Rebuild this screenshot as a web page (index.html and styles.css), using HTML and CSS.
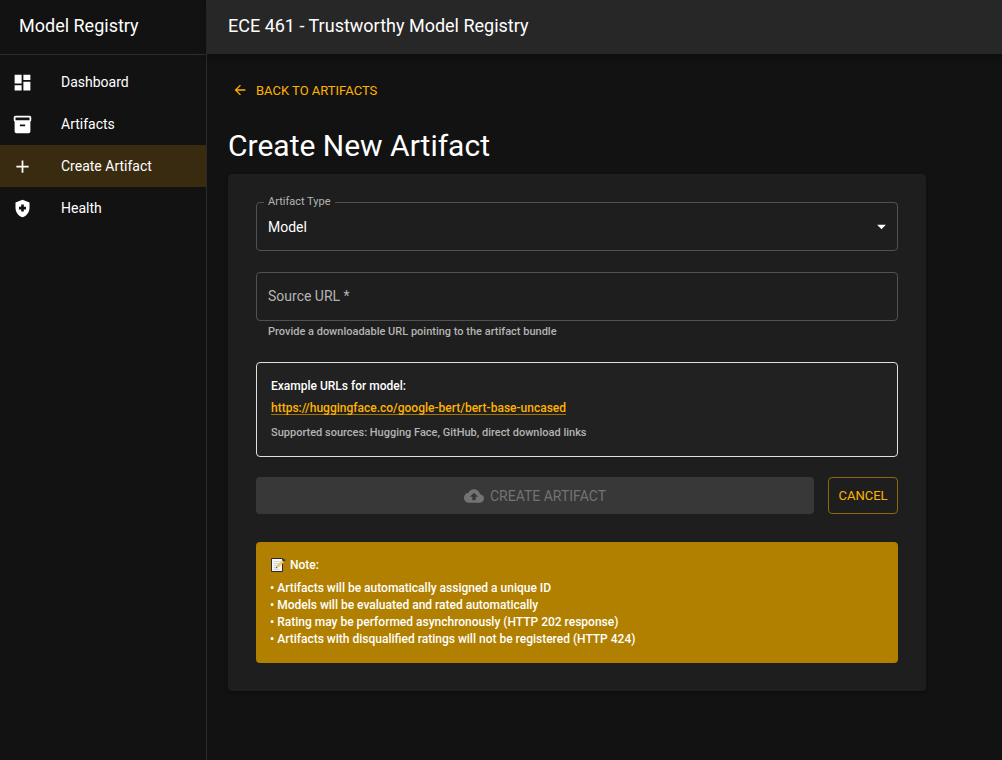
FILE: index.html
```html
<!DOCTYPE html>
<html lang="en">
<head>
<meta charset="utf-8">
<meta name="viewport" content="width=device-width, initial-scale=1">
<title>Create New Artifact - Model Registry</title>
<link rel="stylesheet" href="styles.css">
</head>
<body>
<div class="app">
  <aside class="sidebar">
    <div class="brand">Model Registry</div>
    <nav class="nav">
      <a class="nav-item" href="#dashboard">
        <svg class="icon" viewBox="0 0 24 24" aria-hidden="true"><path d="M3 13h8V3H3zm0 8h8v-6H3zm10 0h8V11h-8zm0-18v6h8V3z"/></svg>
        <span>Dashboard</span>
      </a>
      <a class="nav-item" href="#artifacts">
        <svg class="icon" viewBox="0 0 24 24" aria-hidden="true"><path d="M20 2H4c-1 0-2 .9-2 2v3.010c0 .72.43 1.340 1 1.690V20c0 1.100 1.100 2 2 2h14c.9 0 2-.9 2-2V8.700c.57-.35 1-.97 1-1.690V4c0-1.100-1-2-2-2m-5 12H9v-2h6zm5-7H4V4h16z"/></svg>
        <span>Artifacts</span>
      </a>
      <a class="nav-item nav-item-active" href="#create" aria-current="page">
        <svg class="icon" viewBox="0 0 24 24" aria-hidden="true"><path d="M19 13h-6v6h-2v-6H5v-2h6V5h2v6h6z"/></svg>
        <span>Create Artifact</span>
      </a>
      <a class="nav-item" href="#health">
        <svg class="icon" viewBox="0 0 24 24" aria-hidden="true"><path d="M10.500 13H8v-3h2.500V7.500h3V10H16v3h-2.500v2.500h-3zM12 2 4 5v6.090c0 5.050 3.410 9.760 8 10.910 4.590-1.150 8-5.860 8-10.910V5z"/></svg>
        <span>Health</span>
      </a>
    </nav>
  </aside>

  <div class="content">
    <header class="topbar">ECE 461 - Trustworthy Model Registry</header>
    <main class="main">
      <a class="back" href="#artifacts">
        <svg class="icon-small" viewBox="0 0 24 24" aria-hidden="true"><path d="M20 11H7.830l5.590-5.590L12 4l-8 8 8 8 1.410-1.410L7.830 13H20z"/></svg>
        <span>BACK TO ARTIFACTS</span>
      </a>
      <h1 class="title">Create New Artifact</h1>

      <form class="card">
        <div class="field">
          <label class="label label-raised" for="type">Artifact Type</label>
          <select class="control" id="type">
            <option>Model</option>
            <option>Dataset</option>
            <option>Code</option>
          </select>
          <svg class="icon caret" viewBox="0 0 24 24" aria-hidden="true"><path d="m7 10 5 5 5-5z"/></svg>
        </div>

        <div class="field">
          <label class="label label-inside" for="url">Source URL *</label>
          <input class="control" id="url" type="url" required aria-describedby="url-help">
        </div>
        <p class="help" id="url-help">Provide a downloadable URL pointing to the artifact bundle</p>

        <section class="examples">
          <p class="text">Example URLs for model:</p>
          <a class="example-link" href="https://huggingface.co/google-bert/bert-base-uncased">https://huggingface.co/google-bert/bert-base-uncased</a>
          <p class="caption">Supported sources: Hugging Face, GitHub, direct download links</p>
        </section>

        <div class="actions">
          <button class="button button-submit" type="submit" disabled>
            <svg class="icon-medium" viewBox="0 0 24 24" aria-hidden="true"><path d="M19.350 10.040C18.670 6.590 15.640 4 12 4 9.110 4 6.600 5.640 5.350 8.040 2.340 8.360 0 10.910 0 14c0 3.310 2.690 6 6 6h13c2.760 0 5-2.240 5-5 0-2.640-2.050-4.780-4.650-4.960M14 13v4h-4v-4H7l5-5 5 5z"/></svg>
            <span>CREATE ARTIFACT</span>
          </button>
          <button class="button button-cancel" type="button">CANCEL</button>
        </div>

        <section class="note">
          <h2 class="note-title">
            <svg class="memo" viewBox="0 0 16 16" aria-hidden="true">
              <path d="M1.500 1.500h11v13h-11z" fill="#f4f6f8" stroke="#292b30"/>
              <path d="M3.500 4.500h6M3.500 6.500h5M3.500 8.500h4M3.500 10.500h3M3.500 12.500h6" stroke="#d3d9e0" fill="none"/>
              <path d="m6 11 1-3 5.500-5.500 2 2L9 10z" fill="#f5c86a"/>
              <path d="m12 3 1.500-1.500 2 1.500L14 5z" fill="#34363b"/>
              <path d="m5.500 11.500.8-2 1.200 1.200z" fill="#70513a"/>
            </svg>
            <span>Note:</span>
          </h2>
          <ul class="note-list">
            <li>Artifacts will be automatically assigned a unique ID</li>
            <li>Models will be evaluated and rated automatically</li>
            <li>Rating may be performed asynchronously (HTTP 202 response)</li>
            <li>Artifacts with disqualified ratings will not be registered (HTTP 424)</li>
          </ul>
        </section>
      </form>
    </main>
  </div>
</div>
</body>
</html>
```

FILE: styles.css
```css
* {
  box-sizing: border-box;
}

body {
  margin: 0;
  background: #121212;
  color: #fff;
  font-family: Roboto, "Liberation Sans", sans-serif;
  font-size: 14px;
}

h1, h2, p, ul {
  margin: 0;
  padding: 0;
  font-weight: 400;
}

a {
  color: inherit;
  text-decoration: none;
}

svg {
  display: block;
  flex: none;
  fill: currentColor;
}

.app {
  display: flex;
  min-height: 100vh;
}

.sidebar {
  flex: none;
  width: 207px;
  border-right: 1px solid #2a2a2a;
}

.brand {
  height: 55px;
  padding: 0 19px;
  border-bottom: 1px solid #2e2e2e;
  font-size: 18px;
  line-height: 52px;
}

.nav {
  padding: 6px 0;
}

.nav-item {
  display: flex;
  align-items: center;
  gap: 28px;
  height: 42px;
  padding: 0 12px;
  font-size: 14px;
}

.nav-item-active {
  background: #392b10;
}

.icon {
  width: 21px;
  height: 21px;
}

.icon-small {
  width: 16px;
  height: 16px;
}

.icon-medium {
  width: 20px;
  height: 20px;
}

.content {
  flex: 1;
  min-width: 0;
}

.topbar {
  height: 54px;
  padding: 0 21px;
  background: #272727;
  box-shadow: 0 2px 4px rgba(0, 0, 0, 0.2), 0 1px 9px rgba(0, 0, 0, 0.12);
  font-size: 18px;
  line-height: 52px;
}

.main {
  max-width: 740px;
  padding: 20px 21px;
}

.back {
  display: flex;
  align-items: center;
  gap: 8px;
  width: max-content;
  height: 32px;
  padding: 0 4px;
  color: #ffb300;
  font-size: 13px;
}

.title {
  padding: 20px 0 8px;
  font-size: 30px;
  line-height: 40px;
}

.card {
  padding: 28px;
  border-radius: 4px;
  background: #1e1e1e;
  box-shadow: 0 2px 2px rgba(0, 0, 0, 0.14), 0 1px 4px rgba(0, 0, 0, 0.12);
}

.field {
  position: relative;
}

.field + .field {
  margin-top: 21px;
}

.control {
  display: block;
  width: 100%;
  height: 49px;
  padding: 0 11px;
  border: 1px solid #515151;
  border-radius: 4px;
  outline: none;
  appearance: none;
  background: transparent;
  color: #fff;
  font: 14px Roboto, "Liberation Sans", sans-serif;
}

.control:focus {
  border-color: #ffb300;
}

.control option {
  background: #1e1e1e;
}

.label {
  position: absolute;
  color: #b4b4b4;
  pointer-events: none;
}

.label-raised {
  top: -7px;
  left: 8px;
  padding: 0 4px;
  background: #1e1e1e;
  font-size: 11px;
  line-height: 14px;
}

.label-inside {
  top: 0;
  left: 12px;
  font-size: 14px;
  line-height: 48px;
}

.caret {
  position: absolute;
  top: 14px;
  right: 6px;
  pointer-events: none;
}

.help {
  padding: 4px 12px 0;
  color: #b4b4b4;
  font-size: 11px;
  font-weight: 500;
  line-height: 14px;
}

.examples {
  margin-top: 23px;
  padding: 14px;
  border: 1px solid #e0e0e0;
  border-radius: 4px;
  background: #212121;
  line-height: 18px;
}

.text {
  font-size: 12px;
  font-weight: 500;
}

.example-link {
  display: inline-block;
  margin-top: 4px;
  color: #ffb300;
  font-size: 12px;
  font-weight: 500;
  text-decoration: underline;
  text-decoration-color: #a37300;
  text-underline-offset: 2px;
}

.caption {
  margin-top: 7px;
  color: #b4b4b4;
  font-size: 11px;
  font-weight: 500;
}

.actions {
  display: flex;
  gap: 14px;
  margin-top: 20px;
}

.button {
  display: flex;
  align-items: center;
  justify-content: center;
  gap: 6px;
  height: 37px;
  border: 0;
  border-radius: 4px;
  font: 13px Roboto, "Liberation Sans", sans-serif;
}

.button-submit {
  flex: 1;
  background: #383838;
  color: #737373;
  font-size: 14px;
}

.button-cancel {
  width: 70px;
  border: 1px solid #8f680b;
  background: transparent;
  color: #ffb300;
}

.note {
  margin-top: 28px;
  padding: 14px 14px 15px;
  border-radius: 4px;
  background: #b28000;
}

.note-title {
  display: flex;
  align-items: center;
  gap: 4px;
  font-size: 12px;
  font-weight: 500;
  line-height: 18px;
}

.memo {
  width: 16px;
  height: 16px;
}

.note-list {
  margin-top: 6px;
  list-style: none;
  font-size: 12px;
  font-weight: 500;
  line-height: 17px;
}

.note-list li::before {
  content: "• ";
}
```
